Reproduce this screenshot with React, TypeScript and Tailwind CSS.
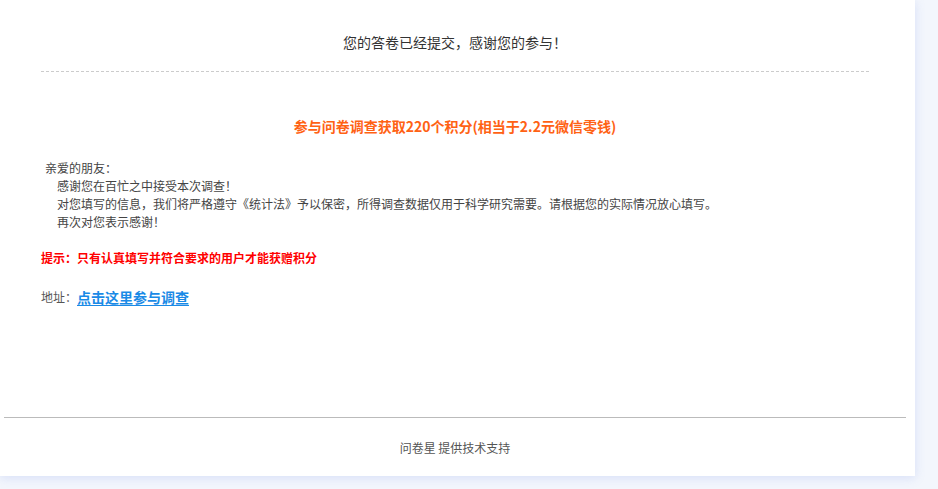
import React from "react";

export default function App() {
  const font = { fontFamily: '"Noto Sans CJK SC", "Noto Sans", sans-serif' };
  return (
    <div className="w-[938px] h-[489px] bg-[#f3f6fc] overflow-hidden" style={font}>
      <div className="w-[915px] h-[476px] bg-white shadow-[0_2px_10px_rgba(90,120,230,0.18)] flex flex-col">
        <div className="mx-[41px] w-[828px] pt-[32px] pb-[19px] border-b border-dashed border-[#cccccc]">
          <div className="text-center text-[14px] leading-[20px] text-[#333]">
            您的答卷已经提交，感谢您的参与！
          </div>
        </div>
        <div className="mx-[41px] w-[828px] mt-[44px]">
          <div className="text-center text-[14px] leading-[20px] font-bold text-[#ff6214]">
            参与问卷调查获取220个积分(相当于2.2元微信零钱)
          </div>
          <div className="mt-[23px] text-[12px] leading-[18px] text-[#444]">
            <div className="pl-[4px]">亲爱的朋友：</div>
            <div className="pl-[16px]">感谢您在百忙之中接受本次调查！</div>
            <div className="pl-[16px]">
              对您填写的信息，我们将严格遵守《统计法》予以保密，所得调查数据仅用于科学研究需要。请根据您的实际情况放心填写。
            </div>
            <div className="pl-[16px]">再次对您表示感谢！</div>
          </div>
          <div className="mt-[18px] text-[12px] leading-[18px] font-bold text-[#ff0000]">
            提示：只有认真填写并符合要求的用户才能获赠积分
          </div>
          <div className="mt-[20px] flex items-center text-[12px] leading-[20px] text-[#555]">
            <span>地址：</span>
            <a href="#" className="text-[14px] font-bold text-[#1a8ae6] underline underline-offset-2">
              点击这里参与调查
            </a>
          </div>
        </div>
        <div className="mt-auto ml-[4px] w-[902px] border-t border-[#bbbbbb] h-[59px] flex items-center justify-center">
          <span className="text-[12px] leading-[18px] text-[#555] pt-[2px]">问卷星 提供技术支持</span>
        </div>
      </div>
    </div>
  );
}
